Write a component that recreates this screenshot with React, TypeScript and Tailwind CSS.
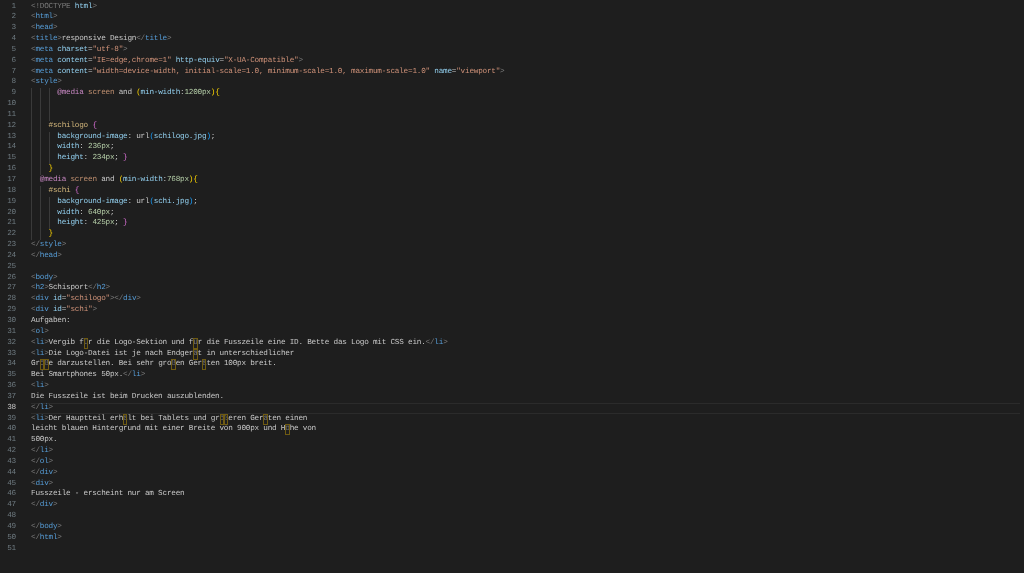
import React from "react";

type Seg = [string, string];

// colours
const A = "text-[#7a7a7a]"; // angle brackets
const T = "text-[#569cd6]"; // tag names
const N = "text-[#92cfee]"; // attribute names
const S = "text-[#ce9178]"; // strings
const P = "text-[#c8c8c8]"; // plain text
const C = "text-[#d0b47a]"; // css selector
const K = "text-[#c09070]"; // media type
const M = "text-[#c586c0]"; // at rule
const V = "text-[#b5cea8]"; // numbers
const Y = "text-[#ffd700]"; // bracket 1
const O = "text-[#da70d6]"; // bracket 2
const B = "text-[#179fff]"; // bracket 3

const open = (name: string): Seg[] => [["<", A], [name, T], [">", A]];
const close = (name: string): Seg[] => [["</", A], [name, T], [">", A]];

const lines: Seg[][] = [
  [["<!", A], ["DOCTYPE", A], [" html", N], [">", A]],
  open("html"),
  open("head"),
  [...open("title"), ["responsive Design", P], ...close("title")],
  [["<", A], ["meta", T], [" charset", N], ["=", P], ['"utf-8"', S], [">", A]],
  [["<", A], ["meta", T], [" content", N], ["=", P], ['"IE=edge,chrome=1"', S], [" http-equiv", N], ["=", P], ['"X-UA-Compatible"', S], [">", A]],
  [["<", A], ["meta", T], [" content", N], ["=", P], ['"width=device-width, initial-scale=1.0, minimum-scale=1.0, maximum-scale=1.0"', S], [" name", N], ["=", P], ['"viewport"', S], [">", A]],
  open("style"),
  [["      ", P], ["@media", M], [" screen", K], [" and ", P], ["(", Y], ["min-width", N], [":", P], ["1200px", V], [")", Y], ["{", Y]],
  [["      ", P]],
  [["      ", P]],
  [["    ", P], ["#schilogo", C], [" ", P], ["{", O]],
  [["      ", P], ["background-image", N], [": ", P], ["url", P], ["(", B], ["schilogo.jpg", N], [")", B], [";", P]],
  [["      ", P], ["width", N], [": ", P], ["236px", V], [";", P]],
  [["      ", P], ["height", N], [": ", P], ["234px", V], ["; ", P], ["}", O]],
  [["    ", P], ["}", Y]],
  [["  ", P], ["@media", M], [" screen", K], [" and ", P], ["(", Y], ["min-width", N], [":", P], ["768px", V], [")", Y], ["{", Y]],
  [["    ", P], ["#schi", C], [" ", P], ["{", O]],
  [["      ", P], ["background-image", N], [": ", P], ["url", P], ["(", B], ["schi.jpg", N], [")", B], [";", P]],
  [["      ", P], ["width", N], [": ", P], ["640px", V], [";", P]],
  [["      ", P], ["height", N], [": ", P], ["425px", V], ["; ", P], ["}", O]],
  [["    ", P], ["}", Y]],
  close("style"),
  close("head"),
  [],
  open("body"),
  [...open("h2"), ["Schisport", P], ...close("h2")],
  [["<", A], ["div", T], [" id", N], ["=", P], ['"schilogo"', S], [">", A], ...close("div")],
  [["<", A], ["div", T], [" id", N], ["=", P], ['"schi"', S], [">", A]],
  [["Aufgaben:", P]],
  open("ol"),
  [...open("li"), ["Vergib für die Logo-Sektion und für die Fusszeile eine ID. Bette das Logo mit CSS ein.", P], ...close("li")],
  [...open("li"), ["Die Logo-Datei ist je nach Endgerät in unterschiedlicher", P]],
  [["Größe darzustellen. Bei sehr großen Geräten 100px breit.", P]],
  [["Bei Smartphones 50px.", P], ...close("li")],
  open("li"),
  [["Die Fusszeile ist beim Drucken auszublenden.", P]],
  close("li"),
  [...open("li"), ["Der Hauptteil erhält bei Tablets und größeren Geräten einen", P]],
  [["leicht blauen Hintergrund mit einer Breite von 900px und Höhe von", P]],
  [["500px.", P]],
  close("li"),
  close("ol"),
  close("div"),
  open("div"),
  [["Fusszeile - erscheint nur am Screen", P]],
  close("div"),
  [],
  close("body"),
  close("html"),
  [],
];

// umlauts get the amber box the editor draws around ambiguous characters
function Text({ value, color }: { value: string; color: string }) {
  // leading whitespace is drawn as indent guides
  if (value.trim() === "" && value.length > 1) {
    return (
      <>
        {Array.from({ length: Math.floor(value.length / 2) }).map((_, i) => (
          <span key={i} className="inline-block h-[10.85px] w-[8.78px] border-l border-[#3a3a3a] align-top" />
        ))}
      </>
    );
  }
  const parts = value.split(/([äöüß])/);
  return (
    <span className={color}>
      {parts.map((part, i) =>
        /^[äöüß]$/.test(part) ? (
          <span key={i} className="inline-block h-[11px] text-[#777777] outline outline-1 -outline-offset-1 outline-[#6e5a12]">
            {part}
          </span>
        ) : (
          part
        )
      )}
    </span>
  );
}

export default function App() {
  return (
    <div className="h-[573px] w-[1024px] overflow-hidden bg-[#1e1e1e] pt-[1.5px] font-['Liberation_Mono',monospace] text-[7.7px] leading-[10.85px] tracking-[-0.23px] blur-[0.4px] [text-rendering:geometricPrecision]">
      {lines.map((segs, i) => (
        <div key={i} className="flex h-[10.85px]">
          <div className={`w-[31px] shrink-0 pr-[15px] text-right ${i === 37 ? "text-[#c6c6c6]" : "text-[#6e7a80]"}`}>
            {i + 1}
          </div>
          <div className={`w-[989px] whitespace-pre ${i === 37 ? "shadow-[inset_0_1px_0_#2b2b2b,inset_0_-1px_0_#2b2b2b]" : ""}`}>
            {segs.map(([value, color], j) => (
              <Text key={j} value={value} color={color} />
            ))}
          </div>
        </div>
      ))}
    </div>
  );
}
